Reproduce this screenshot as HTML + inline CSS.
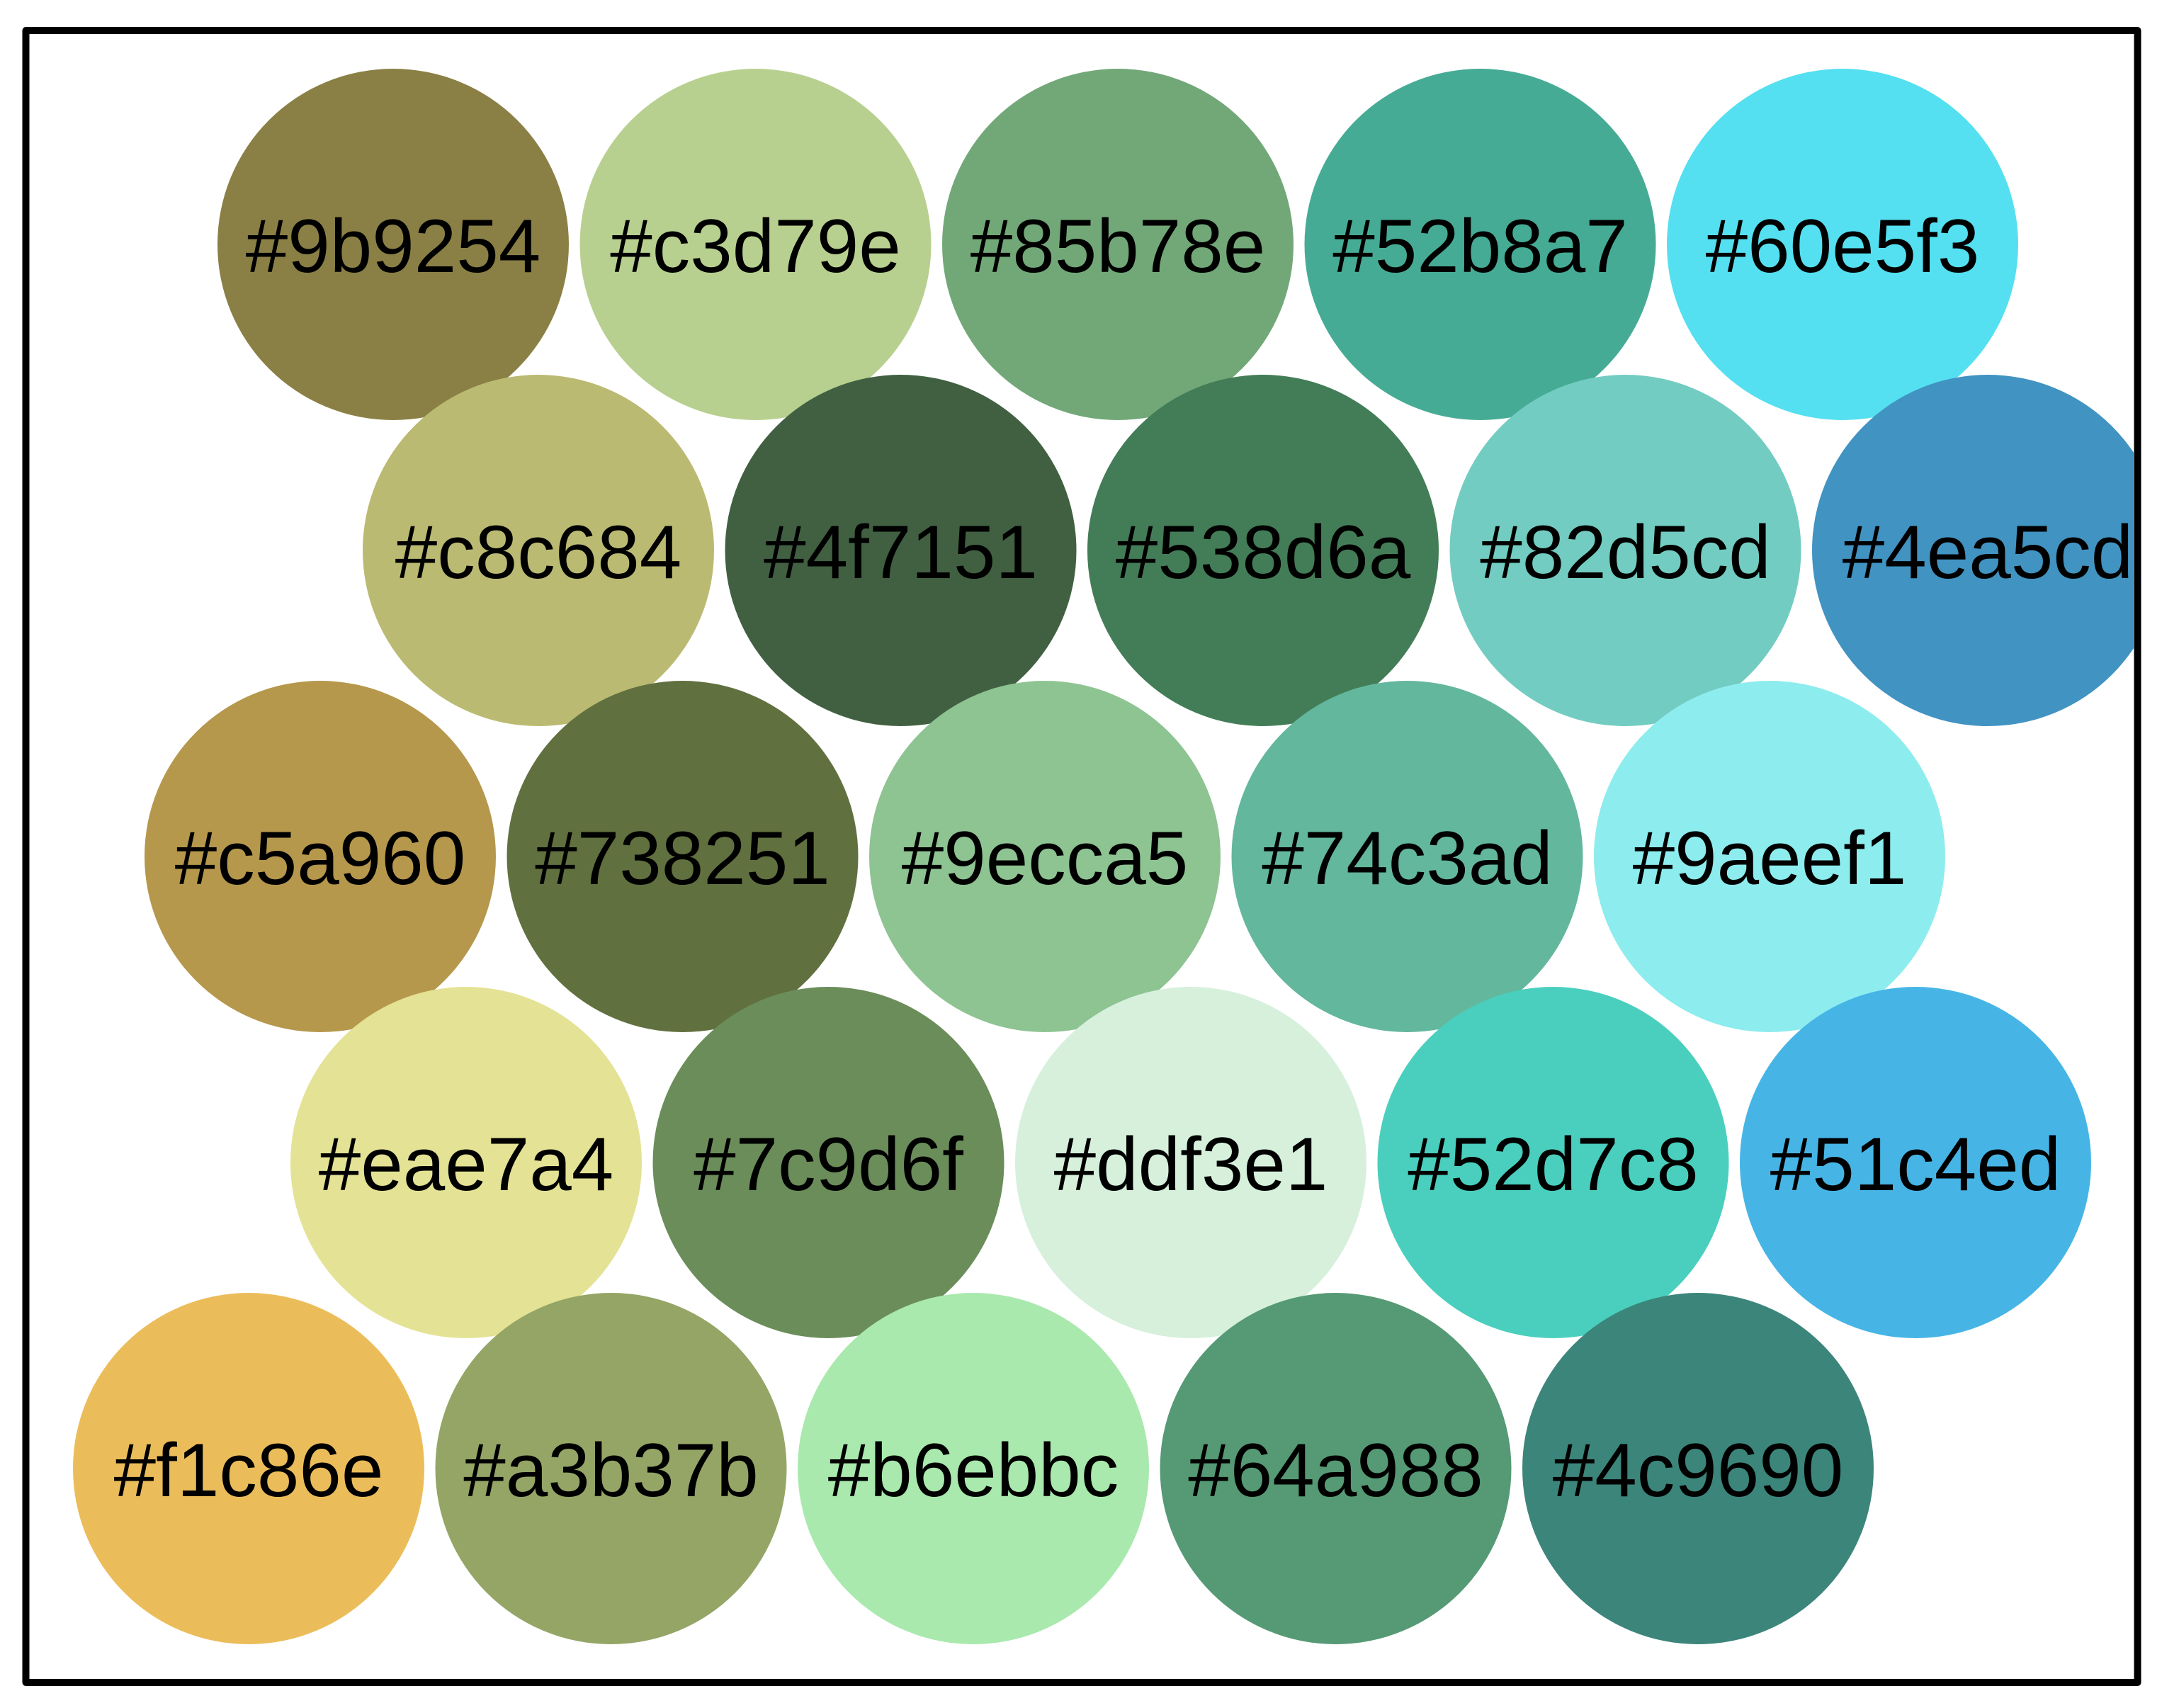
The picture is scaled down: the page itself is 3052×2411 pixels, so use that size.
<!DOCTYPE html>
<html><head><meta charset="utf-8"><style>
html,body{margin:0;padding:0;background:#fff;}
svg{display:block;}
text{font-family:"Liberation Sans",Arial,sans-serif;font-size:107px;fill:#000;text-anchor:middle;}
</style></head><body>
<svg width="3052" height="2411" viewBox="0 0 3052 2411" xmlns="http://www.w3.org/2000/svg">
<defs><clipPath id="c"><rect x="41" y="48" width="2971" height="2322"/></clipPath></defs>
<rect width="3052" height="2411" fill="#fff"/>
<g clip-path="url(#c)">
<circle cx="555" cy="345" r="248" fill="#8a8045"/><text x="555" y="384">#9b9254</text>
<circle cx="1066.5" cy="345" r="248" fill="#b8d08f"/><text x="1066.5" y="384">#c3d79e</text>
<circle cx="1578" cy="345" r="248" fill="#72a878"/><text x="1578" y="384">#85b78e</text>
<circle cx="2089.5" cy="345" r="248" fill="#46ab95"/><text x="2089.5" y="384">#52b8a7</text>
<circle cx="2601" cy="345" r="248" fill="#54e0f0"/><text x="2601" y="384">#60e5f3</text>

<circle cx="760" cy="777" r="248" fill="#bbba72"/><text x="760" y="816">#c8c684</text>
<circle cx="1271.5" cy="777" r="248" fill="#416042"/><text x="1271.5" y="816">#4f7151</text>
<circle cx="1783" cy="777" r="248" fill="#437d57"/><text x="1783" y="816">#538d6a</text>
<circle cx="2294.5" cy="777" r="248" fill="#72ccc1"/><text x="2294.5" y="816">#82d5cd</text>
<circle cx="2806" cy="777" r="248" fill="#4193c2"/><text x="2806" y="816">#4ea5cd</text>

<circle cx="452" cy="1209" r="248" fill="#b6984c"/><text x="452" y="1248">#c5a960</text>
<circle cx="963.5" cy="1209" r="248" fill="#61703f"/><text x="963.5" y="1248">#738251</text>
<circle cx="1475" cy="1209" r="248" fill="#8ec392"/><text x="1475" y="1248">#9ecca5</text>
<circle cx="1986.5" cy="1209" r="248" fill="#63b79d"/><text x="1986.5" y="1248">#74c3ad</text>
<circle cx="2498" cy="1209" r="248" fill="#8decee"/><text x="2498" y="1248">#9aeef1</text>

<circle cx="658" cy="1641" r="248" fill="#e4e294"/><text x="658" y="1680">#eae7a4</text>
<circle cx="1169.5" cy="1641" r="248" fill="#6b8d5a"/><text x="1169.5" y="1680">#7c9d6f</text>
<circle cx="1681" cy="1641" r="248" fill="#d6f0dc"/><text x="1681" y="1680">#ddf3e1</text>
<circle cx="2192.5" cy="1641" r="248" fill="#4acfbe"/><text x="2192.5" y="1680">#52d7c8</text>
<circle cx="2704" cy="1641" r="248" fill="#46b5e6"/><text x="2704" y="1680">#51c4ed</text>

<circle cx="351" cy="2073" r="248" fill="#ebbd5a"/><text x="351" y="2112">#f1c86e</text>
<circle cx="862.5" cy="2073" r="248" fill="#94a566"/><text x="862.5" y="2112">#a3b37b</text>
<circle cx="1374" cy="2073" r="248" fill="#a9e9ad"/><text x="1374" y="2112">#b6ebbc</text>
<circle cx="1885.5" cy="2073" r="248" fill="#559a74"/><text x="1885.5" y="2112">#64a988</text>
<circle cx="2397" cy="2073" r="248" fill="#3c857b"/><text x="2397" y="2112">#4c9690</text>
</g>
<rect x="36.5" y="43" width="2981" height="2332" fill="none" stroke="#000" stroke-width="10" stroke-linejoin="round"/>
</svg>
</body></html>
